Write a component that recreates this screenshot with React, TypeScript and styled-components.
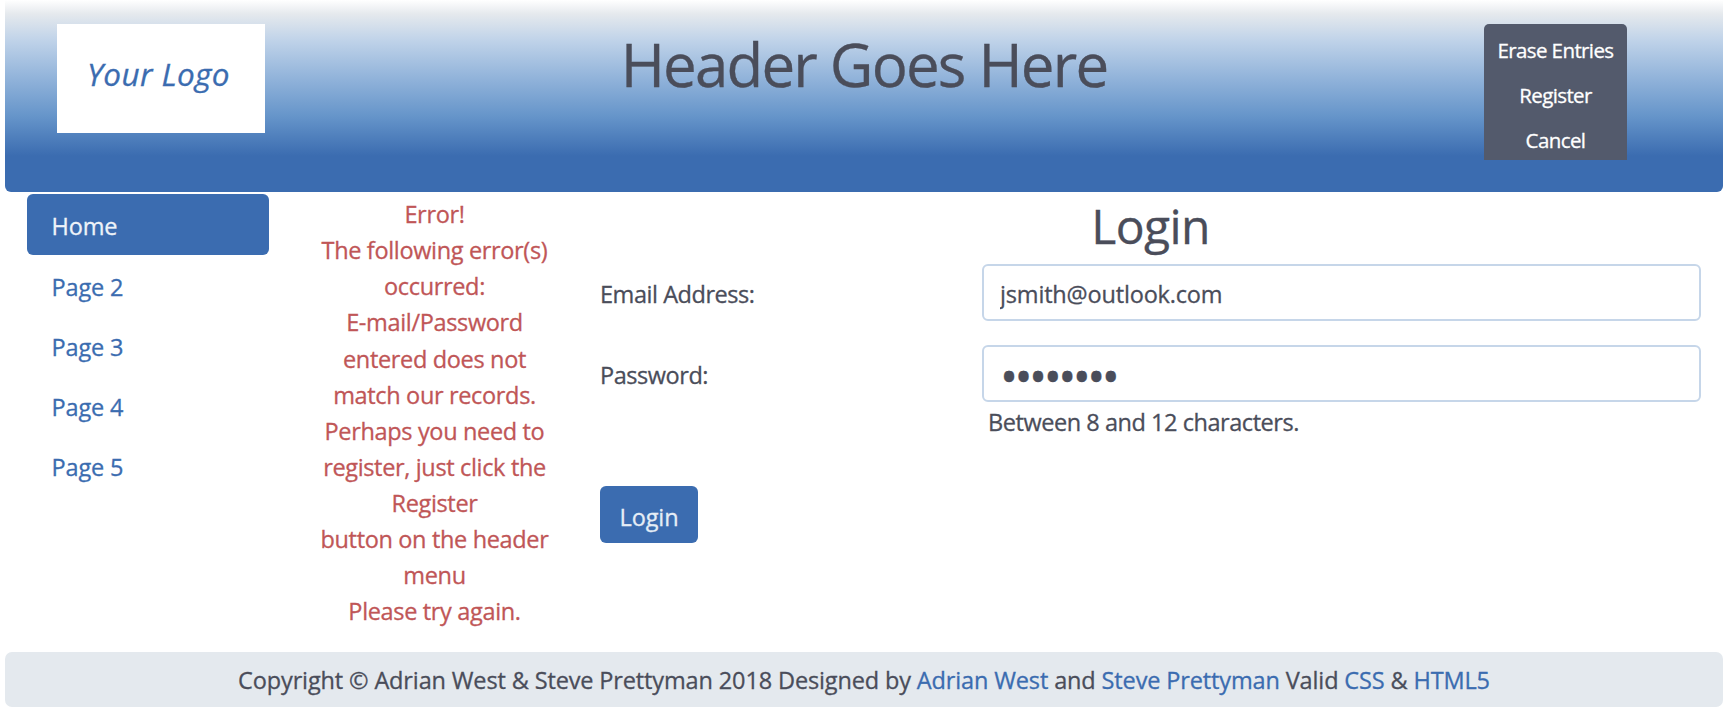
import React from "react";
import styled, { createGlobalStyle } from "styled-components";

const ink = "#4a4d5a";
const blue = "#3b6cb0";
const red = "#c05657";

const GlobalStyle = createGlobalStyle`
  *, *::before, *::after { box-sizing: border-box; }
  html, body { margin: 0; background: #fff; }
  body {
    font-family: "Open Sans", "Noto Sans", sans-serif;
    font-size: 23.5px;
    line-height: 36px;
    color: ${ink};
    letter-spacing: -0.45px;
    -webkit-text-stroke: 0.3px currentColor;
    overflow: hidden;
  }
`;

const Page = styled.div`
  width: 1725px;
  height: 711px;
  padding: 0 2px 0 5px;
  display: flex;
  flex-direction: column;
`;

const Header = styled.header`
  height: 192px;
  flex: none;
  display: grid;
  grid-template-columns: 208px 1fr 143px;
  align-items: start;
  padding: 24px 96px 0 52px;
  border-radius: 0 0 6px 6px;
  background: linear-gradient(
    #ffffff 0,
    #e5e9ed 14px,
    #c0d3e9 40px,
    #94b5db 76px,
    #6695ca 116px,
    ${blue} 156px
  );
`;

const Logo = styled.div`
  height: 109px;
  padding: 28px 0 0 30px;
  background: #fff;
  color: ${blue};
  font-size: 31.5px;
  font-style: italic;
  line-height: 44px;
  letter-spacing: 0.4px;
  white-space: nowrap;
`;

const Title = styled.h1`
  margin: 4px 0 0;
  padding-right: 21px;
  font-size: 60px;
  font-weight: 400;
  line-height: 72px;
  letter-spacing: -1.8px;
  text-align: center;
  white-space: nowrap;
`;

const HeaderMenu = styled.div`
  height: 136px;
  display: flex;
  flex-direction: column;
  border-radius: 5px 5px 0 0;
  background: #535a6c;
  overflow: hidden;
`;

const MenuButton = styled.button`
  height: 45px;
  padding: 6px 0 0;
  border: 0;
  background: none;
  color: #fff;
  font: inherit;
  font-size: 20.5px;
  letter-spacing: -0.6px;
  white-space: nowrap;
`;

const Main = styled.main`
  flex: none;
  height: 460px;
  display: grid;
  grid-template-columns: 242px 249px 1101px;
  padding: 2px 0 0 22px;
  column-gap: 41px;
`;

const Nav = styled.nav`
  display: flex;
  flex-direction: column;
  letter-spacing: -0.15px;
`;

const NavLink = styled.a<{ $active?: boolean }>`
  height: ${(p) => (p.$active ? "61px" : "60.2px")};
  padding: ${(p) => (p.$active ? "14px" : "13.8px")} 0 0 24.5px;
  border-radius: 6px;
  text-decoration: none;
  color: ${(p) => (p.$active ? "#eef3f9" : blue)};
  background: ${(p) => (p.$active ? blue : "transparent")};
`;

const Errors = styled.p`
  margin: 2px 0 0;
  line-height: 36.12px;
  letter-spacing: -0.34px;
  text-align: center;
  color: ${red};
  white-space: nowrap;
`;

const Form = styled.form`
  display: flex;
  flex-direction: column;
`;

const FormTitle = styled.h2`
  margin: 4px 0 10px;
  font-size: 48px;
  font-weight: 400;
  line-height: 56px;
  letter-spacing: -0.6px;
  text-align: center;
`;

const FieldRow = styled.div`
  display: grid;
  grid-template-columns: 382px 719px;
  margin-bottom: 24px;
`;

const Label = styled.label`
  padding-top: 12px;
`;

const Input = styled.input<{ $masked?: boolean }>`
  display: block;
  width: 719px;
  height: 57px;
  padding: 3px 16px 0;
  border: 2px solid #c6d6e9;
  border-radius: 6px;
  background: #fff;
  color: ${ink};
  font: inherit;
  font-size: ${(p) => (p.$masked ? "48px" : "23.5px")};
  letter-spacing: ${(p) => (p.$masked ? "-3.5px" : "-0.17px")};
  outline: none;
`;

const Hint = styled.div`
  padding: 2px 0 0 6px;
`;

const Submit = styled.button`
  width: 98px;
  height: 57px;
  margin-top: 22px;
  padding: 4px 0 0;
  border: 0;
  border-radius: 6px;
  background: ${blue};
  color: #e5edf6;
  font: inherit;
  letter-spacing: -0.1px;
`;

const Footer = styled.footer`
  height: 55px;
  flex: none;
  padding-top: 10px;
  border-radius: 7px;
  background: #e4e9ee;
  letter-spacing: -0.135px;
  text-align: center;
  white-space: nowrap;
`;

const FooterLink = styled.a`
  color: ${blue};
  text-decoration: none;
`;

const pages = ["Home", "Page 2", "Page 3", "Page 4", "Page 5"];

const errorLines = [
  "Error!",
  "The following error(s)",
  "occurred:",
  "E-mail/Password",
  "entered does not",
  "match our records.",
  "Perhaps you need to",
  "register, just click the",
  "Register",
  "button on the header",
  "menu",
  "Please try again.",
];

export default function App() {
  return (
    <Page>
      <GlobalStyle />
      <Header>
        <Logo>Your Logo</Logo>
        <Title>Header Goes Here</Title>
        <HeaderMenu>
          <MenuButton>Erase Entries</MenuButton>
          <MenuButton>Register</MenuButton>
          <MenuButton>Cancel</MenuButton>
        </HeaderMenu>
      </Header>
      <Main>
        <Nav>
          {pages.map((name, i) => (
            <NavLink key={name} href="#" $active={i === 0}>
              {name}
            </NavLink>
          ))}
        </Nav>
        <Errors>
          {errorLines.map((line) => (
            <React.Fragment key={line}>
              {line}
              <br />
            </React.Fragment>
          ))}
        </Errors>
        <Form>
          <FormTitle>Login</FormTitle>
          <FieldRow>
            <Label htmlFor="email">Email Address:</Label>
            <Input id="email" type="text" defaultValue="jsmith@outlook.com" />
          </FieldRow>
          <FieldRow>
            <Label htmlFor="password">Password:</Label>
            <div>
              <Input id="password" type="password" $masked defaultValue="password" />
              <Hint>Between 8 and 12 characters.</Hint>
            </div>
          </FieldRow>
          <Submit type="button">Login</Submit>
        </Form>
      </Main>
      <Footer>
        Copyright © Adrian West &amp; Steve Prettyman 2018 Designed by{" "}
        <FooterLink href="#">Adrian West</FooterLink> and{" "}
        <FooterLink href="#">Steve Prettyman</FooterLink> Valid{" "}
        <FooterLink href="#">CSS</FooterLink> &amp; <FooterLink href="#">HTML5</FooterLink>
      </Footer>
    </Page>
  );
}
